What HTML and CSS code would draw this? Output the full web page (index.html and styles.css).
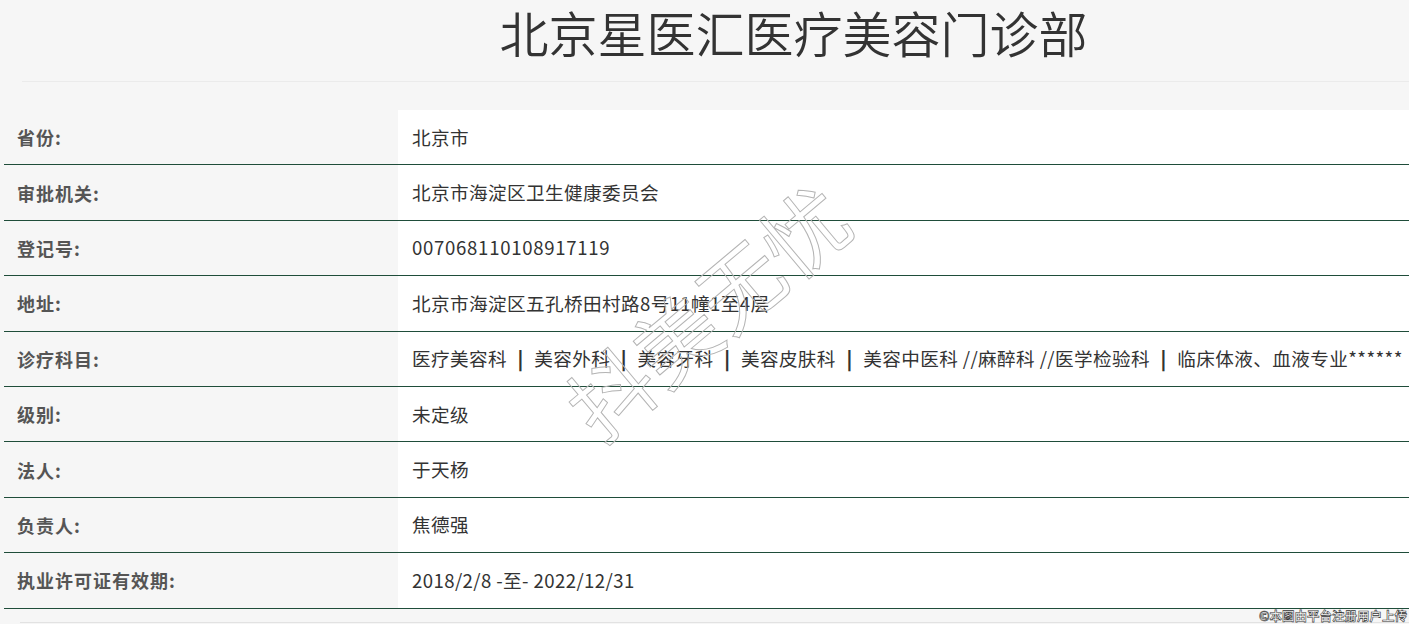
FILE: index.html
```html
<!DOCTYPE html>
<html lang="zh-CN">
<head>
  <meta charset="UTF-8" />
  <meta name="viewport" content="width=device-width, initial-scale=1.0"/>
  <title>北京星医汇医疗美容门诊部</title>
  <link rel="stylesheet" href="styles.css">
</head>
<body>

  <div class="page">
    <div class="header">
      <h1 class="title">北京星医汇医疗美容门诊部</h1>
    </div>

    <div class="info">
      <div class="row"><div class="label">省份:</div><div class="value">北京市</div></div>
      <div class="row"><div class="label">审批机关:</div><div class="value">北京市海淀区卫生健康委员会</div></div>
      <div class="row"><div class="label">登记号:</div><div class="value num">007068110108917119</div></div>
      <div class="row"><div class="label">地址:</div><div class="value">北京市海淀区五孔桥田村路8号11幢1至4层</div></div>
      <div class="row"><div class="label">诊疗科目:</div><div class="value">医疗美容科 <b class="sep">|</b> 美容外科 <b class="sep">|</b> 美容牙科 <b class="sep">|</b> 美容皮肤科 <b class="sep">|</b> 美容中医科 //麻醉科 //医学检验科 <b class="sep">|</b> 临床体液、血液专业******</div></div>
      <div class="row"><div class="label">级别:</div><div class="value">未定级</div></div>
      <div class="row"><div class="label">法人:</div><div class="value">于天杨</div></div>
      <div class="row"><div class="label">负责人:</div><div class="value">焦德强</div></div>
      <div class="row"><div class="label">执业许可证有效期:</div><div class="value">2018/2/8 -至- 2022/12/31</div></div>
    </div>

    <div class="bottomLine"></div>
  </div>

  <div class="watermark">抖美无忧</div>
  <div class="credit">©本图由平台注册用户上传</div>

</body>
</html>
```

FILE: styles.css
```css
body {
  margin: 0;
  background: #f6f6f6;
  font-family: "Noto Sans CJK SC", "Noto Sans", sans-serif;
  color: #333;
  overflow: hidden;
  height: 624px;
}

.page {
  position: relative;
}

.header {
  display: flex;
  justify-content: center;
  align-items: flex-start;
  height: 81px;
  margin-left: 22px;
  border-bottom: 1px solid #ebebeb;
  margin-bottom: 28px;
  padding-left: 156px;
}

.title {
  margin: 0;
  font-size: 49px;
  font-weight: 350;
  line-height: 64px;
  color: #333;
}

.info {
  margin-left: 4px;
}

.row {
  display: flex;
  height: 54.4px;
  border-bottom: 1px solid #1f4d3a;
}

.label {
  width: 381px;
  padding-left: 13px;
  display: flex;
  align-items: center;
  font-size: 18px;
  font-weight: 700;
  letter-spacing: 1px;
  color: #555;
  background: #f6f6f6;
}

.value {
  flex: 1;
  padding-left: 14px;
  display: flex;
  align-items: center;
  padding-bottom: 2px;
  font-size: 18.6px;
  letter-spacing: 0.4px;
  color: #333;
  background: #fff;
  white-space: pre;
  overflow: hidden;
}

.num {
  letter-spacing: 0.7px;
}

.sep {
  font-weight: 900;
  margin: 0 6px;
}

.bottomLine {
  margin: 13px 0 0 20px;
  border-top: 1px solid #e2e2e2;
}

.watermark {
  position: absolute;
  left: 538px;
  top: 268px;
  font-size: 84px;
  line-height: 84px;
  color: transparent;
  -webkit-text-stroke: 1px #b4b4b4;
  transform: rotate(-40deg);
  pointer-events: none;
  white-space: nowrap;
}

.credit {
  position: absolute;
  right: 2px;
  bottom: 1px;
  font-size: 12.5px;
  font-weight: 700;
  color: #fff;
  -webkit-text-stroke: 0.6px #333;
  line-height: 14px;
}
```
